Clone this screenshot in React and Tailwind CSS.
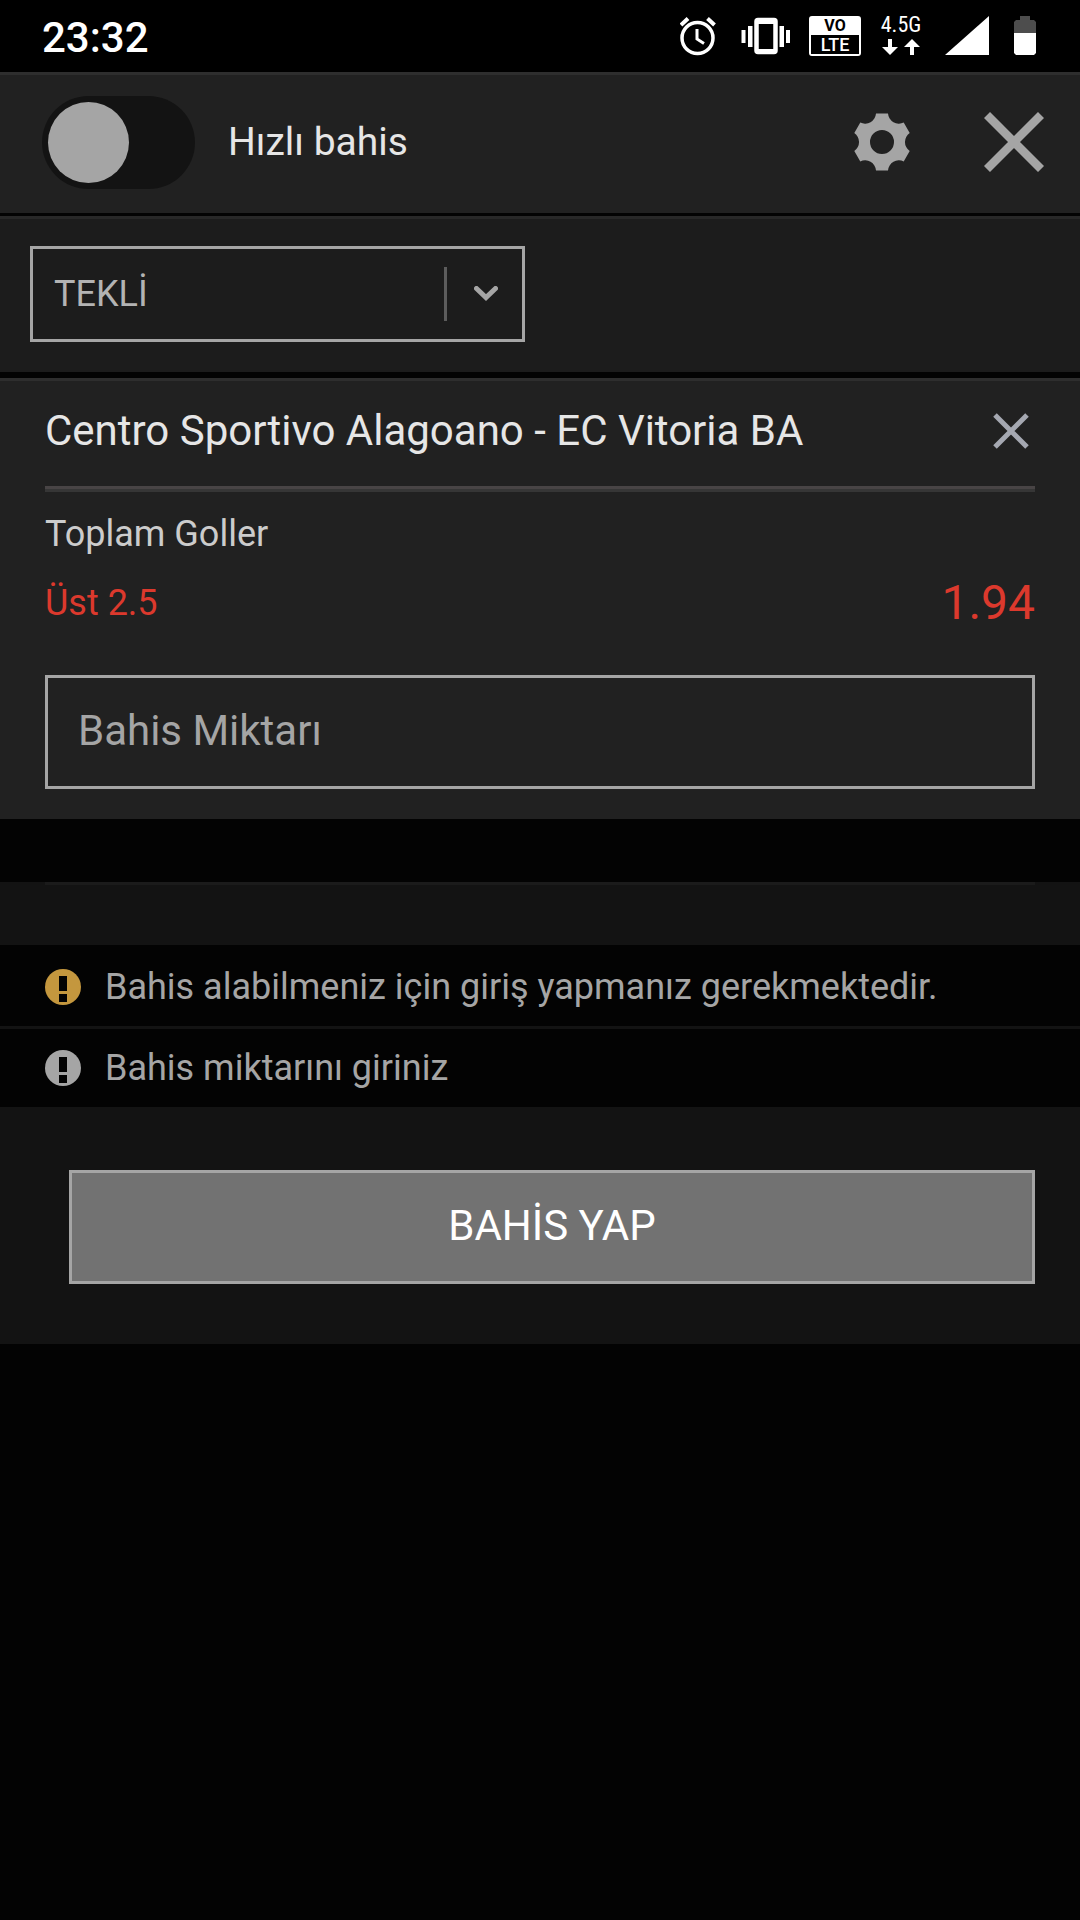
import { useState } from "react";

// Icons shown on the right side of the phone status bar
function StatusIcons() {
  return (
    <div className="flex items-center">
      <svg className="w-[36px] h-[40px]" viewBox="0 0 36 40" fill="none" stroke="white">
        <circle cx="17.500" cy="22" r="15.500" strokeWidth="3.500" />
        <path d="M17 13v10l7 4.500" strokeWidth="3" />
        <path d="M1 9l7-6.500M34.500 9l-7-6.500" strokeWidth="4" />
      </svg>
      <svg className="w-[50px] h-[40px] ml-[25px]" viewBox="0 0 50 40" fill="white">
        <rect x="15.500" y="4" width="19" height="32" rx="1.500" fill="none" stroke="white" strokeWidth="4.500" />
        <path d="M14 4h22v4H14zM14 33h22v4H14z" />
        <path d="M0.500 14h4v13h-4zM7 10h4.500v21H7zM38.500 10H43v21h-4.500zM45 14h4v13h-4z" />
      </svg>
      <div className="w-[52px] h-[40px] ml-[18px] rounded-[3px] border-2 border-white bg-white flex flex-col text-center">
        <span className="h-[17px] text-[16px] leading-[16px] font-bold text-black">VO</span>
        <span className="h-[19px] text-[18px] leading-[19px] font-medium text-white bg-black">LTE</span>
      </div>
      <div className="w-[42px] h-[40px] ml-[19px] flex flex-col items-center justify-between">
        <span className="text-[22px] leading-[18px] font-['Roboto_Condensed',Roboto,sans-serif] text-white">4.5G</span>
        <svg className="w-[38px] h-[17px]" viewBox="0 0 38 17" fill="white">
          <path d="M6 0h4v8h6l-8 8-8-8h6z" />
          <path d="M28 16h4V8h6l-8-8-8 8h6z" />
        </svg>
      </div>
      <svg className="w-[44px] h-[40px] ml-[23px]" viewBox="0 0 44 40" fill="white">
        <path d="M44 0v39H0z" />
      </svg>
      <svg className="w-[22px] h-[40px] ml-[25px]" viewBox="0 0 22 40">
        <path d="M6 0h10v4h4l2 2v11H0V6l2-2h4z" fill="#4d4d4d" />
        <path d="M0 17h22v20l-2 2H2l-2-2z" fill="white" />
      </svg>
    </div>
  );
}

function GearIcon() {
  return (
    <svg className="w-[60px] h-[60px]" viewBox="-30 -30 60 60" fill="#a5a5a5">
      <path
        fillRule="evenodd"
        d="M-6-28.500H6A11 11 0 0 0 21.700-19.400L27.700-9.050A11 11 0 0 0 27.700 9.050L21.700 19.400A11 11 0 0 0 6 28.500H-6A11 11 0 0 0-21.700 19.400L-27.700 9.050A11 11 0 0 0-27.700-9.050L-21.700-19.400A11 11 0 0 0-6-28.500ZM12 0A12 12 0 1 0-12 0A12 12 0 1 0 12 0Z"
      />
    </svg>
  );
}

function AlertIcon({ color }) {
  return (
    <svg className="w-[36px] h-[36px] shrink-0" viewBox="0 0 36 36">
      <circle cx="18" cy="18" r="18" fill={color} />
      <path d="M14 7h8v15h-8zM14 25h8v8h-8z" fill="#030303" />
    </svg>
  );
}

export default function App() {
  const [quickBet, setQuickBet] = useState(false);
  const [betType, setBetType] = useState("single");
  const [amount, setAmount] = useState("");

  return (
    <div className="min-h-screen bg-[#030303] font-[Roboto,sans-serif] text-[36px] leading-[42px]">
      {/* Status bar */}
      <div className="h-[72px] bg-black pb-[16px] pl-[42px] pr-[44px] flex items-end justify-between">
        <span className="text-[42px] leading-[36px] font-medium text-white">23:32</span>
        <StatusIcons />
      </div>

      {/* Quick bet bar */}
      <header className="bg-[#212121] border-t-[3px] border-[#2e2e2e] pt-[21px] pb-[24px] pl-[42px] pr-[36px] flex items-start justify-between">
        <label className="flex items-start gap-[33px]">
          <input
            type="checkbox"
            role="switch"
            checked={quickBet}
            onChange={(e) => setQuickBet(e.target.checked)}
            className="appearance-none w-[153px] h-[93px] rounded-full bg-[#131313] p-[6px] before:block before:w-[81px] before:h-[81px] before:rounded-full before:bg-[#a5a5a5] checked:before:ml-[60px]"
          />
          <span className="text-[39px] leading-[92px] text-[#e6e6e6]">Hızlı bahis</span>
        </label>
        <div className="pt-[16px] flex items-center gap-[72px]">
          <button type="button" aria-label="Ayarlar">
            <GearIcon />
          </button>
          <button type="button" aria-label="Kapat">
            <svg className="w-[60px] h-[60px]" viewBox="0 0 60 60" stroke="#a5a5a5" strokeWidth="8.500">
              <path d="M3 3l54 54M57 3L3 57" />
            </svg>
          </button>
        </div>
      </header>

      {/* Bet type */}
      <div className="mt-[3px] bg-[#1c1c1c] border-t-[3px] border-[#282828] pt-[27px] pb-[30px] px-[30px]">
        <div className="relative w-[495px] max-w-full">
          <select
            aria-label="Bahis tipi"
            value={betType}
            onChange={(e) => setBetType(e.target.value)}
            className="appearance-none w-full h-[96px] border-[3px] border-[#a5a5a5] bg-[#1c1c1c] pl-[21px] pr-[84px] text-[#b3b3b3]"
          >
            <option value="single">TEKLİ</option>
          </select>
          <div className="absolute inset-y-0 right-[27px] flex items-center gap-[27px] pointer-events-none">
            <span className="w-[3px] h-[54px] bg-[#5c5c5c]"></span>
            <svg className="w-[24px] h-[16px]" viewBox="0 0 24 16" fill="none" stroke="#a5a5a5" strokeWidth="5" strokeLinecap="round">
              <path d="M2.500 2.500l9.500 9L21.500 2.500" />
            </svg>
          </div>
        </div>
      </div>

      {/* Selected match */}
      <section className="mt-[6px] bg-[#212121] border-t-[3px] border-[#2e2e2e] px-[45px] pb-[30px]">
        <div className="pt-[26px] pb-[31px] pr-[6px] flex items-center justify-between">
          <h2 className="text-[42px] leading-[48px] text-[#e6e6e6]">
            Centro Sportivo Alagoano - EC Vitoria BA
          </h2>
          <button type="button" aria-label="Sil">
            <svg className="w-[36px] h-[36px]" viewBox="0 0 36 36" stroke="#a5a8b1" strokeWidth="5">
              <path d="M2 2l32 32M34 2L2 34" />
            </svg>
          </button>
        </div>
        <div className="h-[6px] bg-[#363636] border-t-[3px] border-[#484445]"></div>
        <p className="mt-[21px] text-[#cccccc]">Toplam Goller</p>
        <div className="mt-[20px] flex items-center justify-between text-[#dc392d]">
          <span>Üst 2.5</span>
          <span className="text-[48px] leading-[56px]">1.94</span>
        </div>
        <input
          type="text"
          inputMode="decimal"
          aria-label="Bahis Miktarı"
          placeholder="Bahis Miktarı"
          value={amount}
          onChange={(e) => setAmount(e.target.value)}
          className="block mt-[44px] w-full h-[114px] border-[3px] border-[#a5a5a5] px-[30px] pb-[3px] text-[42px] leading-[48px] text-[#e6e6e6] placeholder:text-[#a5a5a5]"
        />
      </section>

      {/* Messages and submit */}
      <div className="mt-[63px] bg-[#131313]">
        <div className="h-[63px] px-[45px]">
          <div className="h-[3px] bg-[#1b1b1b]"></div>
        </div>
        <ul className="space-y-[3px] text-[#a5a5a5]">
          <li className="bg-[#030303] px-[45px] pt-[21px] pb-[18px] flex items-center gap-[24px]">
            <AlertIcon color="#c4973e" />
            <span>Bahis alabilmeniz için giriş yapmanız gerekmektedir.</span>
          </li>
          <li className="bg-[#030303] px-[45px] py-[18px] flex items-center gap-[24px]">
            <AlertIcon color="#a5a5a5" />
            <span>Bahis miktarını giriniz</span>
          </li>
        </ul>
        <div className="pt-[63px] pb-[60px] pl-[69px] pr-[45px]">
          <button
            type="button"
            className="block w-full h-[114px] border-[3px] border-[#a5a5a5] bg-[#727272] pb-[3px] text-[42px] leading-[48px] text-white"
          >
            BAHİS YAP
          </button>
        </div>
      </div>
    </div>
  );
}
